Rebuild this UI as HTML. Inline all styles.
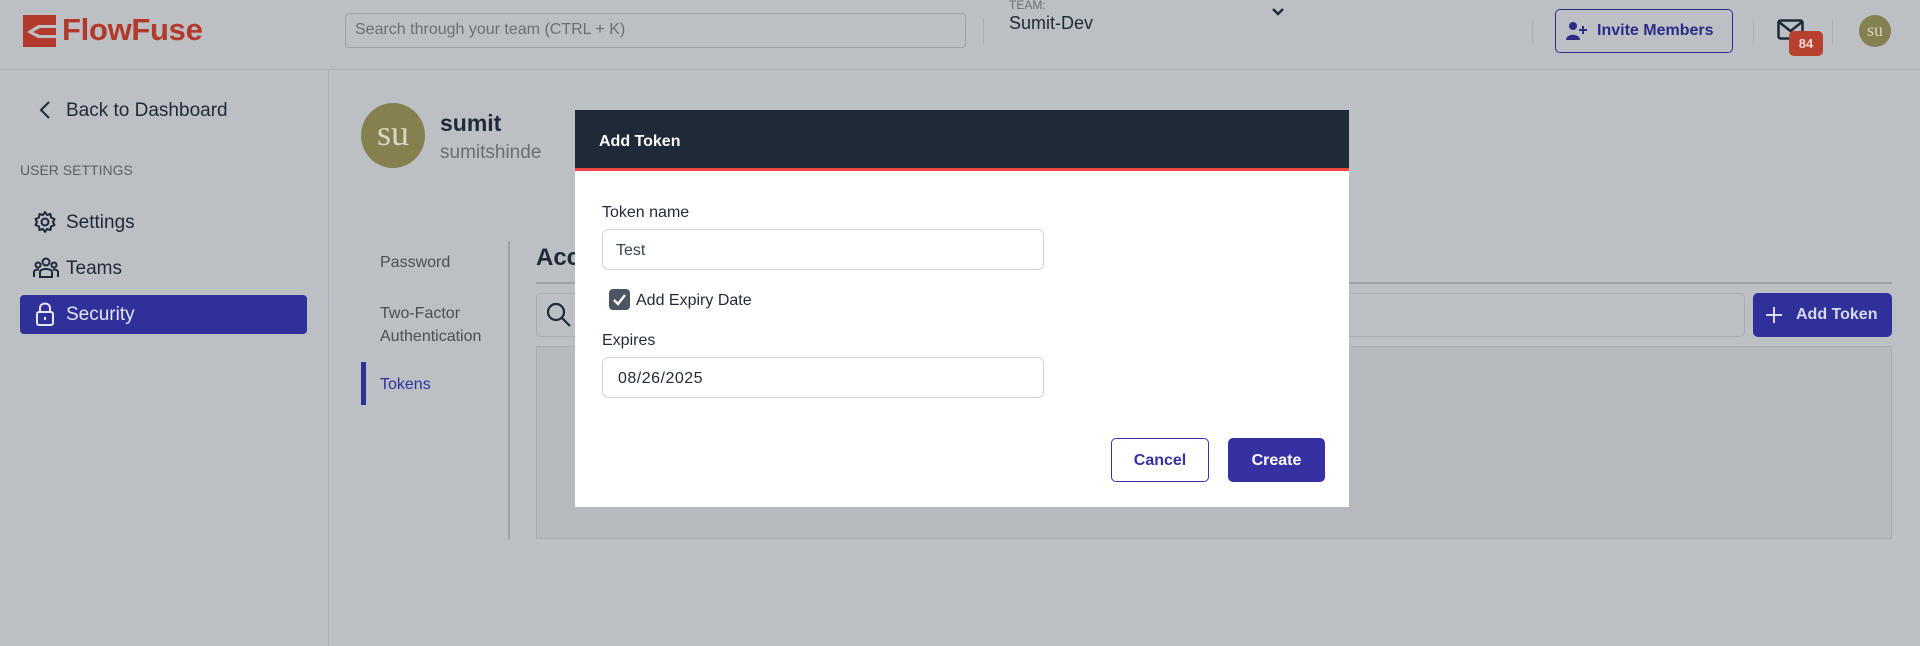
<!DOCTYPE html>
<html><head><meta charset="utf-8"><style>
*{box-sizing:border-box;margin:0;padding:0}
body{width:1920px;height:646px;overflow:hidden;background:#bcbfc4;font-family:"Liberation Sans",sans-serif;color:#1f2937;position:relative}
.a{position:absolute}
.t{position:absolute;white-space:nowrap}
</style></head><body>
<!-- header -->
<div class="a" style="left:0;top:0;width:1920px;height:70px;border-bottom:1px solid #aaadb2"></div>
<svg class="a" style="left:23px;top:15px" width="33" height="32" viewBox="0 0 33 32"><rect width="33" height="32" fill="#b13a2a"/><path d="M33 10H15L4 17 15 23H33V20H17L10 17 17 13H33Z" fill="#bcbfc4"/></svg>
<div class="t" style="left:62px;top:12px;font-size:31px;color:#b13a2a;font-weight:bold;letter-spacing:-0.3px">FlowFuse</div>
<div class="a" style="left:345px;top:13px;width:621px;height:35px;border:1px solid #9ea1a6;border-radius:4px"></div>
<div class="t" style="left:355px;top:21px;font-size:16px;color:#6b6e73">Search through your team (CTRL + K)</div>
<div class="a" style="left:983px;top:18px;width:1px;height:26px;background:#aaadb2"></div>
<div class="t" style="left:1009px;top:-2px;font-size:12px;color:#6b6e73">TEAM:</div>
<div class="t" style="left:1009px;top:13px;font-size:18px;color:#1f2937">Sumit-Dev</div>
<svg class="a" style="left:1270px;top:6px" width="16" height="12" viewBox="0 0 16 12"><path d="M3 3 8 8 13 3" stroke="#1f2937" stroke-width="2.4" fill="none"/></svg>
<div class="a" style="left:1532px;top:20px;width:1px;height:24px;background:#aaadb2"></div>
<div class="a" style="left:1555px;top:9px;width:178px;height:44px;border:1.5px solid #2e2b86;border-radius:5px"></div>
<svg class="a" style="left:1566px;top:21px" width="22" height="20" viewBox="0 0 22 20"><circle cx="7" cy="5" r="4" fill="#2e2b86"/><path d="M0 19C0 12 14 12 14 19Z" fill="#2e2b86"/><path d="M17 5V13M13 9H21" stroke="#2e2b86" stroke-width="2"/></svg>
<div class="t" style="left:1597px;top:22px;font-size:16px;font-weight:bold;color:#2e2b86">Invite Members</div>
<div class="a" style="left:1753px;top:20px;width:1px;height:24px;background:#aaadb2"></div>
<svg class="a" style="left:1777px;top:19px" width="28" height="22" viewBox="0 0 28 22"><rect x="1.5" y="1.5" width="24" height="18" rx="2" stroke="#1f2937" stroke-width="2.5" fill="none"/><path d="M2 3 13.5 12 25 3" stroke="#1f2937" stroke-width="2.5" fill="none"/></svg>
<div class="a" style="left:1789px;top:31px;width:34px;height:25px;background:#b8402e;border-radius:5px;color:#f3d8d3;font-size:13px;font-weight:bold;text-align:center;line-height:25px">84</div>
<div class="a" style="left:1832px;top:20px;width:1px;height:24px;background:#aaadb2"></div>
<div class="a" style="left:1859px;top:15px;width:32px;height:32px;background:#85804f;border-radius:50%;color:#d8d6c4;font-family:'Liberation Serif',serif;font-size:18px;text-align:center;line-height:30px">su</div>
<!-- sidebar -->
<div class="a" style="left:328px;top:70px;width:1px;height:576px;background:#aaadb2"></div>
<svg class="a" style="left:38px;top:100px" width="14" height="20" viewBox="0 0 14 20"><path d="M11 2 3 10 11 18" stroke="#1f2937" stroke-width="2" fill="none"/></svg>
<div class="t" style="left:66px;top:100px;font-size:19px">Back to Dashboard</div>
<div class="t" style="left:20px;top:162px;font-size:14px;color:#5b5e63">USER SETTINGS</div>
<svg class="a" style="left:33px;top:210px" width="24" height="24" viewBox="0 0 24 24"><circle cx="12" cy="12" r="3.5" stroke="#1f2937" stroke-width="2" fill="none"/><path d="M12 2 14 5 17.5 4 18 7.5 21.5 9 20 12 21.5 15 18 16.5 17.5 20 14 19 12 22 10 19 6.5 20 6 16.5 2.5 15 4 12 2.5 9 6 7.5 6.5 4 10 5Z" stroke="#1f2937" stroke-width="2" fill="none" stroke-linejoin="round"/></svg>
<div class="t" style="left:66px;top:212px;font-size:19px">Settings</div>
<svg class="a" style="left:33px;top:257px" width="26" height="22" viewBox="0 0 26 22"><circle cx="13" cy="5" r="3.5" stroke="#1f2937" stroke-width="2" fill="none"/><circle cx="5" cy="8" r="2.5" stroke="#1f2937" stroke-width="2" fill="none"/><circle cx="21" cy="8" r="2.5" stroke="#1f2937" stroke-width="2" fill="none"/><path d="M7 20V15C7 11 19 11 19 15V20ZM1 20V15C1 13 4 12 6 13M25 20V15C25 13 22 12 20 13" stroke="#1f2937" stroke-width="2" fill="none"/></svg>
<div class="t" style="left:66px;top:258px;font-size:19px">Teams</div>
<div class="a" style="left:20px;top:295px;width:287px;height:39px;background:#30309a;border-radius:4px"></div>
<svg class="a" style="left:35px;top:301px" width="20" height="26" viewBox="0 0 20 26"><path d="M5 11V7C5 1 15 1 15 7V11" stroke="#e5e7f2" stroke-width="2" fill="none"/><rect x="2" y="11" width="16" height="13" rx="2" stroke="#e5e7f2" stroke-width="2" fill="none"/><path d="M10 16V19" stroke="#e5e7f2" stroke-width="2"/></svg>
<div class="t" style="left:66px;top:304px;font-size:19px;color:#e5e7f2">Security</div>
<!-- profile -->
<div class="a" style="left:361px;top:103px;width:64px;height:65px;background:#85804f;border-radius:50%;color:#d8d6c4;font-family:'Liberation Serif',serif;font-size:36px;text-align:center;line-height:60px">su</div>
<div class="t" style="left:440px;top:110px;font-size:23px;font-weight:bold">sumit</div>
<div class="t" style="left:440px;top:142px;font-size:19px;color:#6b6e73">sumitshinde</div>
<div class="t" style="left:380px;top:254px;font-size:16px;color:#4b4e53">Password</div>
<div class="t" style="left:380px;top:302px;font-size:16px;color:#4b4e53;line-height:23px">Two-Factor<br>Authentication</div>
<div class="a" style="left:361px;top:362px;width:5px;height:43px;background:#30309a"></div>
<div class="t" style="left:380px;top:376px;font-size:16px;color:#30309a">Tokens</div>
<div class="a" style="left:508px;top:241px;width:1.5px;height:298px;background:#9ea1a6"></div>
<div class="t" style="left:536px;top:244px;font-size:24px;font-weight:bold">Acc</div>
<div class="a" style="left:536px;top:282px;width:1356px;height:1.5px;background:#9ea1a6"></div>
<div class="a" style="left:536px;top:293px;width:1209px;height:44px;border:1px solid #a8abb0;border-radius:5px"></div>
<svg class="a" style="left:546px;top:302px" width="26" height="26" viewBox="0 0 26 26"><circle cx="10" cy="10" r="8" stroke="#1f2937" stroke-width="2.2" fill="none"/><path d="M16 16 24 24" stroke="#1f2937" stroke-width="2.2"/></svg>
<div class="a" style="left:1753px;top:293px;width:139px;height:44px;background:#30309a;border-radius:5px"></div>
<svg class="a" style="left:1765px;top:306px" width="18" height="18" viewBox="0 0 18 18"><path d="M9 1V17M1 9H17" stroke="#d8d9ea" stroke-width="2"/></svg>
<div class="t" style="left:1796px;top:306px;font-size:16px;font-weight:bold;color:#d8d9ea">Add Token</div>
<div class="a" style="left:536px;top:346px;width:1356px;height:193px;border:1px solid #a8abb0;background:#b6b9be"></div>
<!-- modal -->
<div class="a" style="left:575px;top:110px;width:774px;height:397px;background:#fff"></div>
<div class="a" style="left:575px;top:110px;width:774px;height:61px;background:#1f2937;border-bottom:3px solid #ef4444"></div>
<div class="t" style="left:599px;top:133px;font-size:16px;font-weight:bold;color:#fff">Add Token</div>
<div class="t" style="left:602px;top:204px;font-size:16px;font-weight:500;color:#1f2937">Token name</div>
<div class="a" style="left:602px;top:229px;width:442px;height:41px;border:1px solid #d1d5db;border-radius:6px"></div>
<div class="t" style="left:616px;top:242px;font-size:16px;color:#374151">Test</div>
<div class="a" style="left:609px;top:289px;width:21px;height:21px;background:#4b5563;border-radius:4px"></div>
<svg class="a" style="left:611px;top:291px" width="17" height="17" viewBox="0 0 17 17"><path d="M3 9 7 13 14 4" stroke="#fff" stroke-width="2.4" fill="none"/></svg>
<div class="t" style="left:636px;top:292px;font-size:16px;font-weight:500">Add Expiry Date</div>
<div class="t" style="left:602px;top:332px;font-size:16px;font-weight:500">Expires</div>
<div class="a" style="left:602px;top:357px;width:442px;height:41px;border:1px solid #d1d5db;border-radius:6px"></div>
<div class="t" style="left:618px;top:370px;font-size:16px;color:#1f2937;letter-spacing:0.5px">08/26/2025</div>
<div class="a" style="left:1111px;top:438px;width:98px;height:44px;border:1.5px solid #3730a3;border-radius:5px;color:#3730a3;font-size:16px;font-weight:bold;text-align:center;line-height:43px">Cancel</div>
<div class="a" style="left:1228px;top:438px;width:97px;height:44px;background:#3730a3;border-radius:5px;color:#fff;font-size:16px;font-weight:bold;text-align:center;line-height:46px">Create</div>
</body></html>
